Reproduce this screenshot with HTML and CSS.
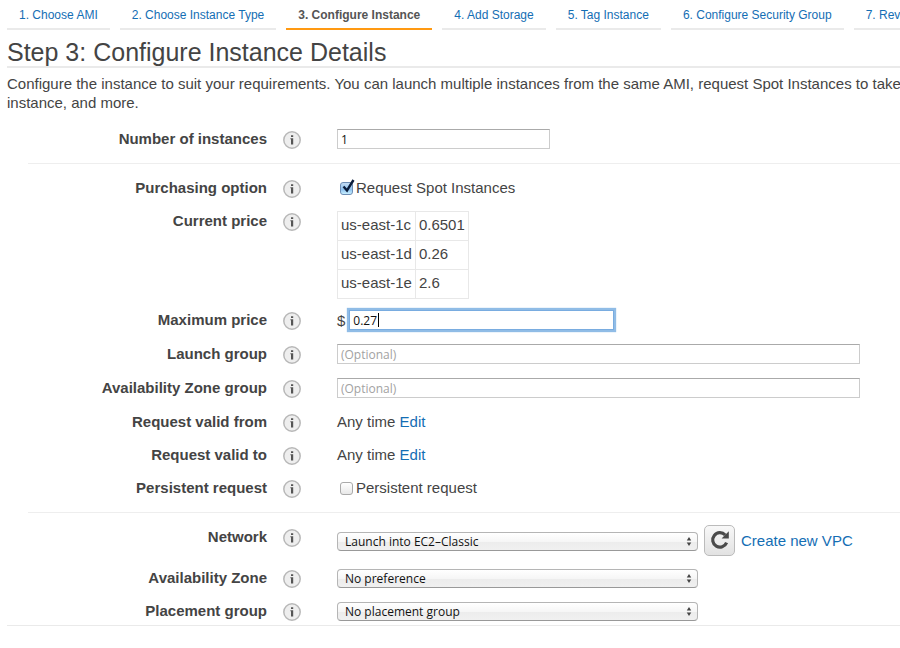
FILE: index.html
```html
<!DOCTYPE html>
<html lang="en">
<head>
<meta charset="utf-8">
<title>Step 3: Configure Instance Details</title>
<link rel="stylesheet" href="styles.css">
</head>
<body>
<svg class="defs" aria-hidden="true">
  <symbol id="info" viewBox="0 0 20 20">
    <circle cx="10" cy="10" r="8.2" fill="#eee" stroke="#b8b8b8" stroke-width="1.5"/>
    <path d="M8.4 8.2h2.8v6.4H9V9.2h-.6zM9 5.2h2.2v1.9H9z" fill="#555"/>
  </symbol>
</svg>
<nav class="steps">
  <a class="step" href="#">1. Choose AMI</a>
  <a class="step" href="#">2. Choose Instance Type</a>
  <a class="step current" href="#" aria-current="step">3. Configure Instance</a>
  <a class="step" href="#">4. Add Storage</a>
  <a class="step" href="#">5. Tag Instance</a>
  <a class="step" href="#">6. Configure Security Group</a>
  <a class="step" href="#">7. Review</a>
</nav>
<main class="page">
  <h1 class="title">Step 3: Configure Instance Details</h1>
  <p class="intro">Configure the instance to suit your requirements. You can launch multiple instances from the same AMI, request Spot Instances to take a<br>instance, and more.</p>

  <form class="form">
    <section class="group">
      <div class="row">
        <label class="name" for="count">Number of instances</label>
        <svg class="info"><use href="#info"/></svg>
        <div class="field"><input class="text short" id="count" type="text" value="1"></div>
      </div>
    </section>

    <section class="group">
      <div class="row">
        <span class="name">Purchasing option</span>
        <svg class="info"><use href="#info"/></svg>
        <div class="field"><label class="check"><input class="box" type="checkbox" checked><svg class="tick" viewBox="0 0 14 16"><path d="M2.5 8.5L6 12.5L12.5 2" fill="none" stroke="#0b1d3c" stroke-width="2.4"/></svg>Request Spot Instances</label></div>
      </div>
      <div class="row">
        <span class="name">Current price</span>
        <svg class="info"><use href="#info"/></svg>
        <div class="field">
          <table class="prices">
            <tr><td>us-east-1c</td><td>0.6501</td></tr>
            <tr><td>us-east-1d</td><td>0.26</td></tr>
            <tr><td>us-east-1e</td><td>2.6</td></tr>
          </table>
        </div>
      </div>
      <div class="row tall">
        <label class="name" for="max">Maximum price</label>
        <svg class="info"><use href="#info"/></svg>
        <div class="field money"><span>$</span><span class="entry"><input class="text focused" id="max" type="text" value="0.27" autofocus><i class="caret"></i></span></div>
      </div>
      <div class="row tall">
        <label class="name" for="launch">Launch group</label>
        <svg class="info"><use href="#info"/></svg>
        <div class="field"><input class="text long" id="launch" type="text" placeholder="(Optional)"></div>
      </div>
      <div class="row tall">
        <label class="name" for="zonegroup">Availability Zone group</label>
        <svg class="info"><use href="#info"/></svg>
        <div class="field"><input class="text long" id="zonegroup" type="text" placeholder="(Optional)"></div>
      </div>
      <div class="row">
        <span class="name">Request valid from</span>
        <svg class="info"><use href="#info"/></svg>
        <div class="field">Any time <a href="#">Edit</a></div>
      </div>
      <div class="row">
        <span class="name">Request valid to</span>
        <svg class="info"><use href="#info"/></svg>
        <div class="field">Any time <a href="#">Edit</a></div>
      </div>
      <div class="row">
        <span class="name">Persistent request</span>
        <svg class="info"><use href="#info"/></svg>
        <div class="field"><label class="check"><input class="box" type="checkbox">Persistent request</label></div>
      </div>
    </section>

    <section class="group">
      <div class="row network">
        <label class="name" for="network">Network</label>
        <svg class="info"><use href="#info"/></svg>
        <div class="field tools">
          <span class="picker"><select class="select" id="network"><option>Launch into EC2–Classic</option></select><svg class="arrows" viewBox="0 0 6 10"><path d="M3 0L5.5 3.8H.5zM3 10L.5 6.2h5z" fill="#444"/></svg></span>
          <button class="refresh" type="button" aria-label="Refresh"><svg viewBox="0 0 20 20"><path d="M16.6 12.6A7.2 7.2 0 1 1 15.2 5" fill="none" stroke="#4a4a4a" stroke-width="3.2"/><path d="M18.8 1.2V8.4H11.6z" fill="#4a4a4a"/></svg></button>
          <a href="#">Create new VPC</a>
        </div>
      </div>
      <div class="row">
        <label class="name" for="zone">Availability Zone</label>
        <svg class="info"><use href="#info"/></svg>
        <div class="field"><span class="picker"><select class="select" id="zone"><option>No preference</option></select><svg class="arrows" viewBox="0 0 6 10"><path d="M3 0L5.5 3.8H.5zM3 10L.5 6.2h5z" fill="#444"/></svg></span></div>
      </div>
      <div class="row last">
        <label class="name" for="placement">Placement group</label>
        <svg class="info"><use href="#info"/></svg>
        <div class="field"><span class="picker"><select class="select" id="placement"><option>No placement group</option></select><svg class="arrows" viewBox="0 0 6 10"><path d="M3 0L5.5 3.8H.5zM3 10L.5 6.2h5z" fill="#444"/></svg></span></div>
      </div>
    </section>
  </form>
</main>
</body>
</html>
```
FILE: styles.css
```css
* { box-sizing: border-box; }

body {
  margin: 0;
  overflow: hidden;
  background: #fff;
  color: #444;
  font: 15px/19px "Liberation Sans", Arial, sans-serif;
}

a { color: #146eb4; text-decoration: none; }

.defs { position: absolute; width: 0; height: 0; }

.steps {
  display: flex;
  gap: 10px;
  padding: 6px 0 0 7px;
  overflow: hidden;
}

.step {
  flex: none;
  height: 24px;
  padding: 0 12px;
  border-bottom: 2px solid #eaeaea;
  font-size: 12px;
  white-space: nowrap;
}

.step.current {
  border-color: #ff9912;
  color: #555;
  font-weight: bold;
}

.page { padding-left: 7px; }

.title {
  margin: 0;
  padding-top: 9px;
  border-bottom: 2px solid #eaeaea;
  font-size: 25px;
  font-weight: normal;
  line-height: 27px;
}

.intro {
  margin: 6px 0 0;
  overflow: hidden;
  white-space: nowrap;
}

.form { border-bottom: 1px solid #eaeaea; }

.group {
  margin-left: 21px;
  padding: 8px 0 7px;
  border-bottom: 1px solid #eee;
}

.group:first-child { padding-top: 11px; }
.group:last-child { padding-bottom: 0; border-bottom: 0; }

.row {
  display: grid;
  grid-template-columns: 239px 50px 1fr;
  align-items: start;
  min-height: 33px;
  padding: 4px 0;
}

.row.tall { min-height: 34px; }
.row.network { min-height: 41px; }
.row.last { min-height: 30px; padding-bottom: 0; }

.name {
  padding-top: 2px;
  font-weight: bold;
  text-align: right;
}

.info {
  width: 20px;
  height: 20px;
  margin: 3px 0 0 15px;
}

.field {
  padding: 2px 0 0 20px;
}

.text {
  display: block;
  height: 20px;
  padding: 0 3px;
  border: 1px solid #ccc;
  border-top-color: #aaa;
  border-radius: 0;
  background: #fff;
  color: #111;
  font: 12px/18px "Open Sans", sans-serif;
  outline: 0;
}

.text::placeholder { color: #a2a2a2; opacity: 1; }
.short { width: 213px; }
.long { width: 100%; max-width: 523px; }

.money {
  display: flex;
  align-items: center;
  gap: 4px;
}

.entry { position: relative; }

.focused {
  width: 265px;
  border-color: #79ace0;
  box-shadow: 0 0 1px 2px #90bce6;
  caret-color: transparent;
}

.caret {
  position: absolute;
  left: 29px;
  top: 3px;
  width: 1px;
  height: 14px;
  background: #000;
}

.check {
  display: flex;
  align-items: center;
  gap: 3px;
  position: relative;
  padding-left: 3px;
}

.box {
  appearance: none;
  width: 13px;
  height: 13px;
  margin: 2px 0 0;
  border: 1px solid #aaa;
  border-radius: 3px;
  background: linear-gradient(#fff, #e8e8e8);
}

.box:checked {
  border-color: #6d8db5;
  background: linear-gradient(#c3dbf3, #8fc3f0 60%, #c8efff);
}

.tick {
  position: absolute;
  left: 4px;
  top: 0;
  width: 14px;
  height: 16px;
}

.prices {
  margin-bottom: 1px;
  border-collapse: collapse;
}

.prices td {
  padding: 4px 3px 6px;
  height: 29px;
  border: 1px solid #e8e8e8;
  line-height: 18px;
}

.tools {
  display: flex;
  align-items: center;
  gap: 6px;
  padding-top: 0;
}

.picker {
  display: block;
  position: relative;
  width: 361px;
  padding-top: 1px;
}

.select {
  appearance: none;
  display: block;
  width: 100%;
  height: 19px;
  padding: 0 20px 0 7px;
  border: 1px solid #b5b5b5;
  border-bottom-color: #999;
  border-radius: 4px;
  background: linear-gradient(#fff, #f6f6f6 50%, #ececec 51%, #f0f0f0);
  color: #111;
  font: 12px/17px "Open Sans", sans-serif;
}

.arrows {
  position: absolute;
  right: 6px;
  top: 6px;
  width: 6px;
  height: 9px;
}

.refresh {
  flex: none;
  display: grid;
  place-items: center;
  width: 31px;
  height: 31px;
  padding: 0 0 2px;
  border: 1px solid #bbb;
  border-radius: 5px;
  background: linear-gradient(#f8f8f8, #e2e2e2);
}

.refresh svg { width: 20px; height: 20px; }
```
